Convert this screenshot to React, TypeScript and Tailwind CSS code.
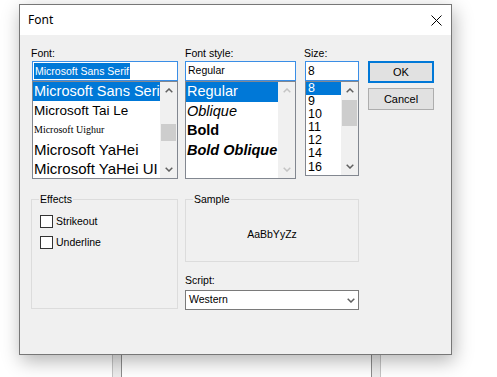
import React from "react";

function Chevron({ dir, color }: { dir: "up" | "down"; color: string }) {
  return (
    <svg width="8" height="5" viewBox="0 0 8 5" className="block">
      <path
        d={dir === "up" ? "M0.7 4.3 L4 1 L7.3 4.3" : "M0.7 0.7 L4 4 L7.3 0.7"}
        fill="none"
        stroke={color}
        strokeWidth="1.5"
      />
    </svg>
  );
}

function Scrollbar({ enabled, thumb }: { enabled: boolean; thumb?: "font" | "size" }) {
  const c = enabled ? "#606060" : "#c4c4c4";
  return (
    <div className="w-[17px] h-full bg-[#f0f0f0] flex flex-col shrink-0">
      <div className="h-[17px] flex items-center justify-center">
        <Chevron dir="up" color={c} />
      </div>
      <div className="flex-1 flex flex-col">
        {thumb === "font" && <div className="mt-[25px] h-[17px] mx-px bg-[#cdcdcd]" />}
        {thumb === "size" && <div className="mt-px h-[26px] mx-px bg-[#cdcdcd]" />}
      </div>
      <div className="h-[17px] flex items-center justify-center">
        <Chevron dir="down" color={c} />
      </div>
    </div>
  );
}

const sizes = ["8", "9", "10", "11", "12", "14", "16"];

export default function App() {
  return (
    <div className="relative w-[497px] h-[377px] bg-white overflow-hidden font-['Liberation_Sans',Arial,sans-serif] text-black">
      {/* window behind the dialog */}
      <div className="absolute left-[112px] top-[300px] w-[269px] h-[100px] border-x border-[#c4c4c4] bg-[#ececec] px-[8px]">
        <div className="h-full bg-white border-x border-[#8c8c8c]" />
      </div>

      {/* dialog */}
      <div className="absolute left-[19px] top-[4px] w-[433px] h-[351px] border border-[#777777] bg-[#f0f0f0] shadow-[2px_6px_18px_rgba(0,0,0,0.3)] flex flex-col">
        {/* title bar */}
        <div className="h-[30px] bg-white flex items-center justify-between pl-[8px] pr-[9px] shrink-0">
          <span className="font-['Noto_Sans',sans-serif] text-[12px] leading-[16px]">Font</span>
          <svg width="11" height="11" viewBox="0 0 11 11" className="block">
            <path d="M0.5 0.5 L10.5 10.5 M10.5 0.5 L0.5 10.5" stroke="#000" strokeWidth="1" />
          </svg>
        </div>

        {/* body */}
        <div className="flex-1 pl-[12px] pt-[12px] text-[10.5px]">
          {/* row 1 */}
          <div className="flex items-start">
            {/* font */}
            <div className="w-[146px] flex flex-col">
              <div className="h-[14px] leading-[13px] -ml-px">Font:</div>
              <div className="h-[20px] border border-[#3a8ee6] bg-white flex items-center pl-px">
                <span className="h-[16px] leading-[16px] bg-[#0078d7] text-white whitespace-nowrap px-px">
                  Microsoft Sans Serif
                </span>
              </div>
              <div className="h-[98px] border border-[#828790] bg-white flex">
                <div className="flex-1 flex flex-col overflow-hidden">
                  <div className="h-[19.4px] leading-[19px] bg-[#0078d7] text-white text-[14.5px] pl-px whitespace-nowrap">
                    Microsoft Sans Serif
                  </div>
                  <div className="h-[19.4px] leading-[19px] text-[13.5px] pl-px whitespace-nowrap">
                    Microsoft Tai Le
                  </div>
                  <div className="h-[19.4px] leading-[19px] text-[10px] pl-px whitespace-nowrap font-['Liberation_Serif',serif]">
                    Microsoft Uighur
                  </div>
                  <div className="h-[19.4px] leading-[19px] text-[15px] pl-px whitespace-nowrap">
                    Microsoft YaHei
                  </div>
                  <div className="h-[19.4px] leading-[19px] text-[15px] pl-px whitespace-nowrap">
                    Microsoft YaHei UI
                  </div>
                </div>
                <Scrollbar enabled thumb="font" />
              </div>
            </div>

            {/* font style */}
            <div className="w-[111px] ml-[7px] flex flex-col">
              <div className="h-[14px] leading-[13px]">Font style:</div>
              <div className="h-[20px] border border-[#3a8ee6] bg-white flex items-center pl-[2px]">
                Regular
              </div>
              <div className="h-[98px] border border-[#828790] bg-white flex">
                <div className="flex-1 flex flex-col overflow-hidden">
                  <div className="h-[19.5px] leading-[19px] bg-[#0078d7] text-white text-[14.5px] pl-px whitespace-nowrap">
                    Regular
                  </div>
                  <div className="h-[19.5px] leading-[19px] text-[14.5px] italic pl-px whitespace-nowrap">
                    Oblique
                  </div>
                  <div className="h-[19.5px] leading-[19px] text-[14.5px] font-bold pl-px whitespace-nowrap">
                    Bold
                  </div>
                  <div className="h-[19.5px] leading-[19px] text-[14.5px] font-bold italic pl-px whitespace-nowrap">
                    Bold Oblique
                  </div>
                </div>
                <Scrollbar enabled={false} />
              </div>
            </div>

            {/* size */}
            <div className="w-[54px] ml-[9px] flex flex-col">
              <div className="h-[14px] leading-[13px] -ml-px">Size:</div>
              <div className="h-[20px] border border-[#3a8ee6] bg-white flex items-center pl-[2px] text-[12px]">
                8
              </div>
              <div className="h-[95px] border border-[#828790] bg-white flex">
                <div className="flex-1 flex flex-col overflow-hidden">
                  {sizes.map((s, i) => (
                    <div
                      key={s}
                      className={
                        i === 0
                          ? "h-[13.1px] leading-[13px] text-[12.5px] pl-[2px] bg-[#0078d7] text-white"
                          : "h-[13.1px] leading-[13px] text-[12.5px] pl-[2px]"
                      }
                    >
                      {s}
                    </div>
                  ))}
                </div>
                <Scrollbar enabled thumb="size" />
              </div>
            </div>

            {/* buttons */}
            <div className="w-[66px] ml-[9px] mt-[14px] flex flex-col">
              <div className="h-[22px] border-2 border-[#0078d7] bg-[#e1e1e1] flex items-center justify-center text-[11px]">
                OK
              </div>
              <div className="h-[22px] mt-[5px] border border-[#adadad] bg-[#e1e1e1] flex items-center justify-center text-[11px]">
                Cancel
              </div>
            </div>
          </div>

          {/* row 2 */}
          <div className="flex items-start mt-[20px] -ml-px">
            <div className="relative w-[147px] h-[110px] border border-[#dcdcdc] pt-[15px] pl-[8px]">
              <span className="absolute left-[7px] -top-[7px] h-[13px] leading-[13px] px-px bg-[#f0f0f0]">
                Effects
              </span>
              <div className="flex items-center gap-[3px] h-[13px]">
                <div className="w-[13px] h-[13px] border border-[#333333] bg-white" />
                <span className="leading-[13px]">Strikeout</span>
              </div>
              <div className="flex items-center gap-[3px] h-[13px] mt-[8px]">
                <div className="w-[13px] h-[13px] border border-[#333333] bg-white" />
                <span className="leading-[13px]">Underline</span>
              </div>
            </div>

            <div className="w-[174px] ml-[7px] flex flex-col">
              <div className="relative h-[63px] border border-[#dcdcdc] pt-[28px] flex justify-center">
                <span className="absolute left-[7px] -top-[7px] h-[13px] leading-[13px] px-px bg-[#f0f0f0]">
                  Sample
                </span>
                <span className="leading-[13px]">AaBbYyZz</span>
              </div>
              <div className="mt-[12px] h-[13px] leading-[13px]">Script:</div>
              <div className="mt-[3px] h-[20px] border border-[#7a7a7a] bg-white flex items-center justify-between pl-[3px] pr-[3px]">
                <span>Western</span>
                <Chevron dir="down" color="#606060" />
              </div>
            </div>
          </div>
        </div>
      </div>
    </div>
  );
}
